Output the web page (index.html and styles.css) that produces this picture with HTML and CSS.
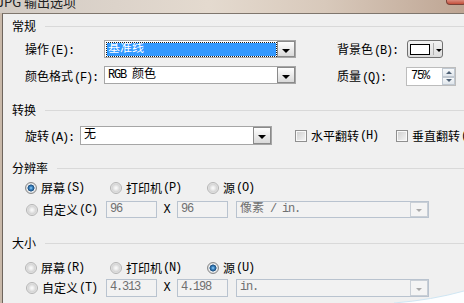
FILE: index.html
```html
<!DOCTYPE html>
<html lang="zh-CN">
<head>
    <meta charset="UTF-8">
    <title>JPG 输出选项</title>
    <link rel="stylesheet" href="styles.css">
</head>
<body>
    <div class="titlebar">
        <span class="title">JPG 输出选项</span>
        <span class="close-btn"></span>
    </div>
    <div class="frame">
        <div class="dialog">
            <div class="group-title first">常规</div>
            <div class="general">
                <span class="lbl">操作<span class="en">(E):</span></span>
                <div class="select focused"><span class="value">基准线</span><span class="drop"></span></div>
                <span></span>
                <span class="lbl">背景色<span class="en">(B):</span></span>
                <div class="color-btn"><span class="swatch"></span><span class="sep"></span><span class="arrow"></span></div>

                <span class="lbl">颜色格式<span class="en">(F):</span></span>
                <div class="select"><span class="value"><span class="en">RGB </span>颜色</span><span class="drop"></span></div>
                <span></span>
                <span class="lbl">质量<span class="en">(Q):</span></span>
                <div class="spin">
                    <span class="value en">75%</span>
                    <span class="arrows"><span class="up"></span><span class="down"></span></span>
                </div>
            </div>

            <div class="group-title transform">转换</div>
            <div class="rotate-row">
                <span class="lbl rotate-lbl">旋转<span class="en">(A):</span></span>
                <div class="select rotate"><span class="value">无</span><span class="drop"></span></div>
                <div class="check-opt first-check"><span class="check"></span>水平翻转<span class="en">(H)</span></div>
                <div class="check-opt"><span class="check"></span>垂直翻转<span class="en">(V)</span></div>
            </div>

            <div class="group-title res">分辨率</div>
            <div class="radio-row res-radios">
                <div class="opt w1"><span class="radio on"></span>屏幕<span class="en">(S)</span></div>
                <div class="opt w2"><span class="radio"></span>打印机<span class="en">(P)</span></div>
                <div class="opt"><span class="radio"></span>源<span class="en">(O)</span></div>
            </div>
            <div class="custom-row res-custom">
                <div class="opt wc"><span class="radio"></span>自定义<span class="en">(C)</span></div>
                <span class="field en">96</span>
                <span class="times">X</span>
                <span class="field en">96</span>
                <div class="select disabled unit"><span class="value">像素<span class="en"> / in.</span></span><span class="drop"></span></div>
            </div>

            <div class="group-title size">大小</div>
            <div class="radio-row size-radios">
                <div class="opt w1"><span class="radio"></span>屏幕<span class="en">(R)</span></div>
                <div class="opt w2"><span class="radio"></span>打印机<span class="en">(N)</span></div>
                <div class="opt"><span class="radio on"></span>源<span class="en">(U)</span></div>
            </div>
            <div class="custom-row size-custom">
                <div class="opt wc"><span class="radio"></span>自定义<span class="en">(T)</span></div>
                <span class="field en">4.313</span>
                <span class="times">X</span>
                <span class="field en">4.198</span>
                <div class="select disabled unit"><span class="value en">in.</span><span class="drop"></span></div>
            </div>
        </div>
    </div>
    <svg class="swoosh" width="70" height="14" viewBox="0 0 70 14">
        <path d="M0 14 Q38 11 70 2 L70 14 Z" fill="#fdfeff"/>
        <path d="M0 14 Q38 11 70 2" fill="none" stroke="#cfe6f3" stroke-width="1"/>
    </svg>
</body>
</html>
```

FILE: styles.css
```css
body {
    margin: 0;
    height: 303px;
    overflow: hidden;
    position: relative;
    background: #c9b9aa;
    font-family: "Liberation Mono", "Noto Sans CJK SC", monospace;
    font-size: 12px;
    color: #000;
}
.en {
    letter-spacing: -1.2px;
}
.titlebar {
    height: 13px;
    display: flex;
    justify-content: space-between;
    overflow: hidden;
    background: linear-gradient(90deg, #d2cbc4 0%, #dcd3ca 25%, #e4dacf 45%, #d8c9bb 70%, #bea593 100%);
}
.title {
    font-family: "Noto Sans CJK SC", sans-serif;
    font-size: 13px;
    line-height: 14px;
    margin: -5px 0 0 -3px;
    color: #222;
}
.close-btn {
    width: 18px;
    height: 4px;
    margin-right: -2px;
    background: linear-gradient(#d98a7c, #c4503c);
    border: 1px solid #7a4036;
    border-top: none;
    border-radius: 0 0 4px 4px;
}
.frame {
    padding-left: 2px;
}
.dialog {
    height: 290px;
    overflow: hidden;
    background: #f0f0f0;
    border-top: 1px solid #7f766d;
    border-left: 1px solid #6e655d;
}
.group-title {
    display: flex;
    align-items: center;
    height: 14px;
    line-height: 14px;
    padding-left: 9px;
    font-family: "Noto Sans CJK SC", sans-serif;
}
.group-title::after {
    content: "";
    flex: 1;
    height: 1px;
    margin-left: 9px;
    background: #d9d9d9;
}
.group-title.first { margin-top: 5px; }
.group-title.transform { margin-top: 17px; }
.group-title.res { margin-top: 16px; }
.group-title.size { margin-top: 18px; }

.lbl {
    white-space: nowrap;
}
.lbl .en {
    margin-left: 1px;
}
.general {
    display: grid;
    grid-template-columns: 79px 192px 41px 69px auto;
    grid-template-rows: 18px 20px;
    row-gap: 8px;
    align-items: center;
    margin-top: 7px;
    padding-left: 22px;
}
.select {
    display: flex;
    height: 18px;
    box-sizing: border-box;
    border: 1px solid #a6a6a6;
    background: #fff;
    white-space: nowrap;
}
.general .select { align-self: start; }
.select .value {
    flex: 1;
    padding-left: 3px;
    line-height: 16px;
    overflow: hidden;
}
.select.focused .value {
    margin: 2px 1px 1px 2px;
    padding-left: 1px;
    line-height: 12px;
    background: #3399ff;
    color: #fff;
    outline: 1px dotted #1a1a1a;
}
.select .drop {
    width: 16px;
    display: flex;
    align-items: center;
    justify-content: center;
    border: 1px solid #8a8a8a;
    background: linear-gradient(#fefefe, #d9d9d9);
}
.select .drop::after {
    content: "";
    margin-top: 3px;
    border-left: 4px solid transparent;
    border-right: 4px solid transparent;
    border-top: 4px solid #000;
}
.color-btn {
    width: 36px;
    height: 18px;
    box-sizing: border-box;
    margin-left: 1px;
    display: flex;
    align-items: center;
    padding-left: 2px;
    border: 1px solid #707070;
    border-radius: 3px;
    background: linear-gradient(#f3f3f3, #dcdcdc);
}
.swatch {
    width: 20px;
    height: 11px;
    box-sizing: border-box;
    border: 1px solid #000;
    background: #fff;
}
.color-btn .sep {
    width: 1px;
    height: 12px;
    margin-left: 3px;
    background: #b0b0b0;
}
.color-btn .arrow {
    margin: 2px 0 0 2px;
    border-left: 3px solid transparent;
    border-right: 3px solid transparent;
    border-top: 3px solid #000;
}
.spin {
    width: 50px;
    height: 19px;
    box-sizing: border-box;
    align-self: end;
    display: flex;
    border: 1px solid #bcbcbc;
    background: #fff;
}
.spin .value {
    flex: 1;
    padding-left: 4px;
    line-height: 17px;
}
.spin .arrows {
    width: 13px;
    display: flex;
    flex-direction: column;
}
.spin .arrows span {
    flex: 1;
    display: flex;
    align-items: center;
    justify-content: center;
    border: 1px solid #c0c8d1;
    background: linear-gradient(#f7f9fb, #e0e6ec);
}
.spin .up::after {
    content: "";
    border-left: 3px solid transparent;
    border-right: 3px solid transparent;
    border-bottom: 3px solid #4e6075;
}
.spin .down::after {
    content: "";
    border-left: 3px solid transparent;
    border-right: 3px solid transparent;
    border-top: 3px solid #4e6075;
}

.rotate-row {
    display: flex;
    align-items: center;
    height: 19px;
    margin-top: 9px;
    padding-left: 22px;
    white-space: nowrap;
}
.rotate-lbl {
    width: 55px;
    flex: none;
}
.select.rotate {
    width: 192px;
    height: 19px;
    flex: none;
}
.check-opt {
    display: flex;
    align-items: center;
    gap: 4px;
    width: 101px;
    flex: none;
}
.check-opt .en {
    margin-left: -3px;
}
.first-check {
    margin-left: 23px;
}
.check {
    width: 12px;
    height: 12px;
    box-sizing: border-box;
    border: 1px solid #8f8f8f;
    background: linear-gradient(135deg, #cdcdcd, #f6f6f6);
    box-shadow: inset 0 0 0 1px #f8f8f8;
}

.radio-row {
    display: flex;
    align-items: center;
    height: 16px;
    padding-left: 22px;
}
.res-radios { margin-top: 5px; }
.size-radios { margin-top: 10px; }
.opt {
    display: flex;
    align-items: center;
    gap: 4px;
    white-space: nowrap;
}
.opt .en {
    margin-left: -3px;
}
.opt.w1 { width: 85px; }
.opt.w2 { width: 97px; }
.opt.wc { width: 80px; }
.radio {
    width: 12px;
    height: 12px;
    flex: none;
    box-sizing: border-box;
    border-radius: 50%;
    border: 1px solid #b4b4b4;
    background: radial-gradient(circle, #fcfcfc 0, #f0f0f0 1.5px, #d4d4d4 4px, #ebebeb 5px);
}
.radio.on {
    border-color: #8a8a8a;
    background: radial-gradient(circle, #9cd8ff 0, #3d86c4 1.5px, #1c4d7c 3.2px, #eef2f5 3.8px, #d4d4d4 5px);
}

.custom-row {
    display: flex;
    align-items: center;
    padding-left: 23px;
    white-space: nowrap;
}
.res-custom { height: 17px; margin-top: 5px; }
.size-custom { height: 18px; margin-top: 3px; }
.field {
    width: 51px;
    height: 100%;
    box-sizing: border-box;
    padding-left: 3px;
    line-height: 15px;
    border: 1px solid #b9c3cf;
    background: #f2f2f2;
    color: #6f6f6f;
}
.times {
    width: 20px;
    text-align: center;
}
.select.disabled {
    height: 100%;
    border-color: #b9c3cf;
    background: #f2f2f2;
    color: #6f6f6f;
}
.select.unit {
    width: 193px;
    margin-left: 8px;
    flex: none;
}
.select.disabled .value {
    line-height: 15px;
}
.select.disabled .drop {
    border-color: #c9cfd6;
    background: #f4f4f4;
}
.select.disabled .drop::after {
    border-left-width: 3px;
    border-right-width: 3px;
    border-top: 3px solid #a9a9a9;
    margin-top: 2px;
}
.swoosh {
    position: absolute;
    right: 0;
    bottom: 0;
}
```
